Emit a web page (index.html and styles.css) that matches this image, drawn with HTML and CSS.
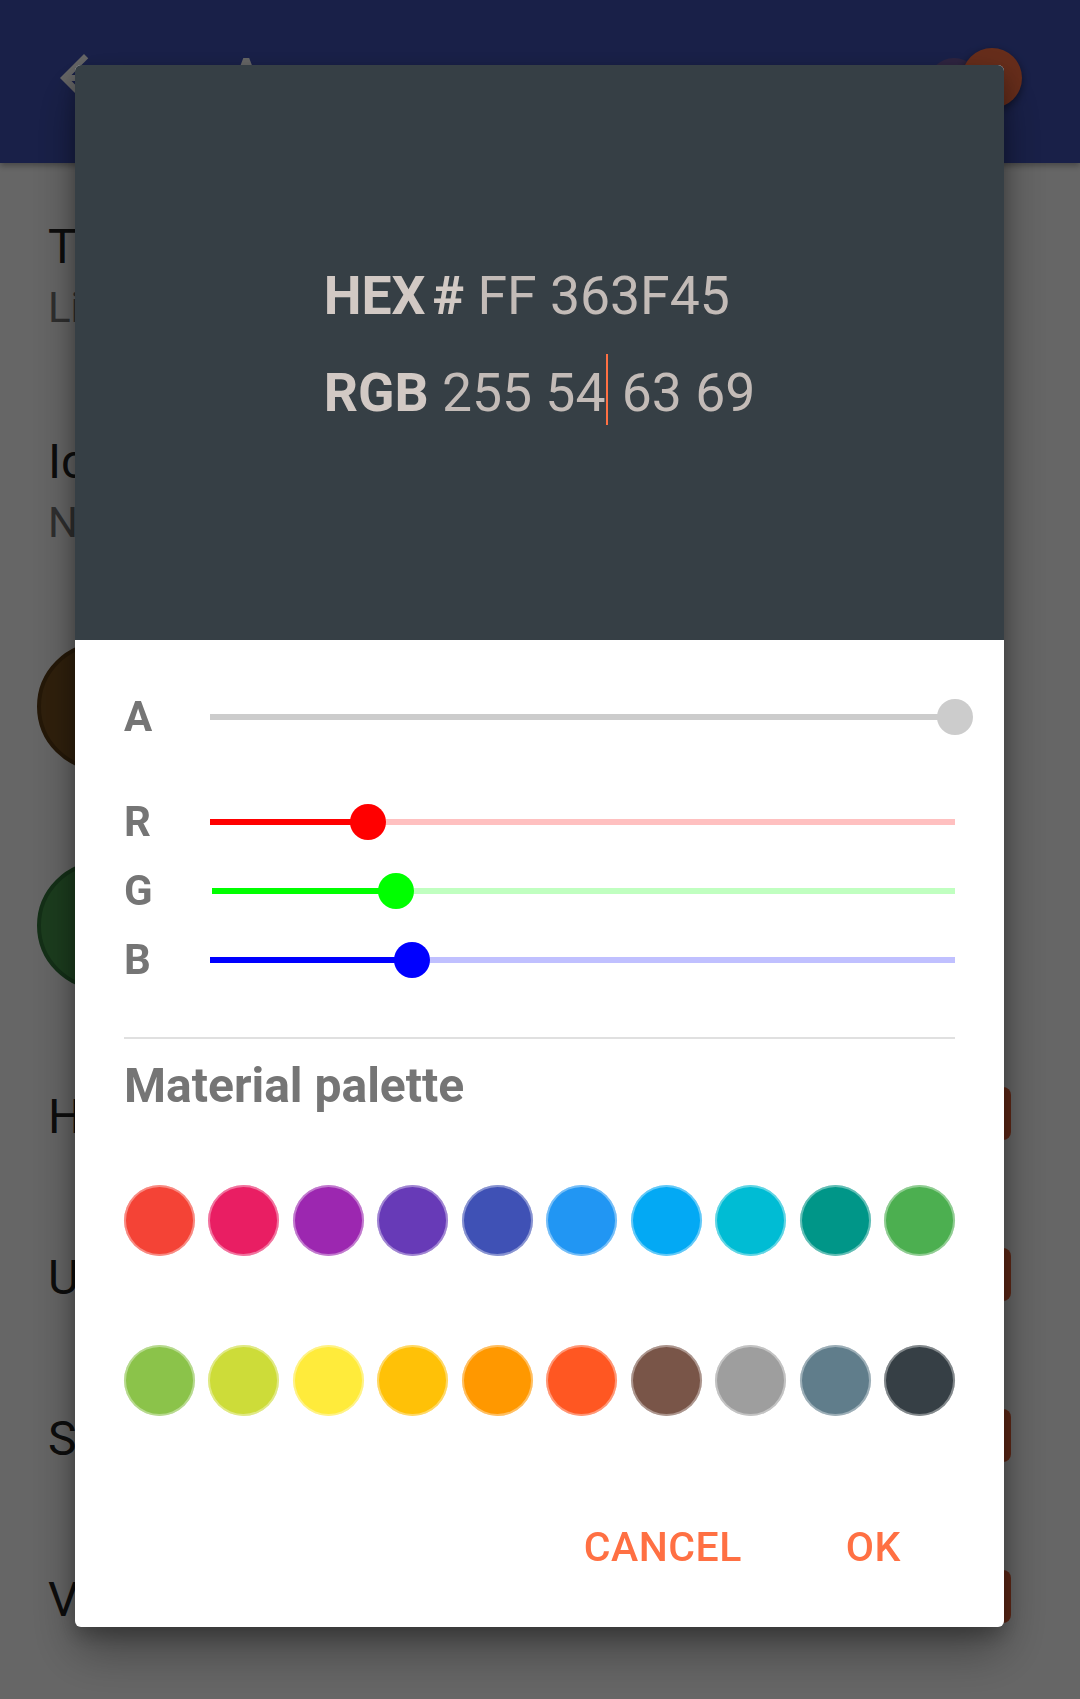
FILE: index.html
```html
<!DOCTYPE html>
<html lang="en">
<head>
<meta charset="utf-8">
<title>Color picker</title>
<link rel="stylesheet" href="styles.css">
</head>
<body>
<div class="page">
  <header class="appbar">
    <svg class="back" viewBox="0 0 24 24"><path d="M20 11H7.83l5.59-5.59L12 4l-8 8 8 8 1.41-1.41L7.83 13H20v-2z"/></svg>
    <div class="title">Appearance</div>
    <div class="actions"><span class="avatar2"></span><span class="avatar"></span></div>
  </header>
  <main class="list">
    <div class="pref first">
      <div class="p-title">Theme</div>
      <div class="p-sub">Light</div>
    </div>
    <div class="pref second">
      <div class="p-title">Icon pack</div>
      <div class="p-sub">None</div>
    </div>
    <div class="dot brown"></div>
    <div class="dot green"></div>
    <div class="row first-row"><span class="row-title">Header</span><span class="obtn"></span></div>
    <div class="row"><span class="row-title">Unread</span><span class="obtn"></span></div>
    <div class="row"><span class="row-title">Sent</span><span class="obtn"></span></div>
    <div class="row"><span class="row-title">Visited</span><span class="obtn"></span></div>
  </main>
</div>
<div class="scrim"></div>
<div class="dialog">
  <div class="preview">
    <div class="codes">
      <div class="line"><span class="key">HEX</span><span class="key hash">#</span> <span class="val">FF 363F45</span></div>
      <div class="line"><span class="key">RGB</span> <span class="val">255 54</span><span class="caret"></span><span class="val"> 63 69</span></div>
    </div>
  </div>
  <div class="body">
    <div class="slider a-row">
      <span class="lbl">A</span>
      <div class="track t-a"><div class="fill f-a" style="width:100%"></div><div class="thumb th-a" style="left:100%"></div></div>
    </div>
    <div class="slider">
      <span class="lbl">R</span>
      <div class="track t-r"><div class="fill f-r" style="width:21.2%"></div><div class="thumb th-r" style="left:21.2%"></div></div>
    </div>
    <div class="slider">
      <span class="lbl">G</span>
      <div class="track t-g"><div class="fill f-g" style="width:24.7%"></div><div class="thumb th-g" style="left:24.7%"></div></div>
    </div>
    <div class="slider">
      <span class="lbl">B</span>
      <div class="track t-b"><div class="fill f-b" style="width:27.1%"></div><div class="thumb th-b" style="left:27.1%"></div></div>
    </div>
    <div class="divider"></div>
    <div class="pal-title">Material palette</div>
    <div class="swatches first-sw">
      <span class="sw" style="background:#F44336"></span>
      <span class="sw" style="background:#E91E63"></span>
      <span class="sw" style="background:#9C27B0"></span>
      <span class="sw" style="background:#673AB7"></span>
      <span class="sw" style="background:#3F51B5"></span>
      <span class="sw" style="background:#2196F3"></span>
      <span class="sw" style="background:#03A9F4"></span>
      <span class="sw" style="background:#00BCD4"></span>
      <span class="sw" style="background:#009688"></span>
      <span class="sw" style="background:#4CAF50"></span>
    </div>
    <div class="swatches second-sw">
      <span class="sw" style="background:#8BC34A"></span>
      <span class="sw" style="background:#CDDC39"></span>
      <span class="sw" style="background:#FFEB3B"></span>
      <span class="sw" style="background:#FFC107"></span>
      <span class="sw" style="background:#FF9800"></span>
      <span class="sw" style="background:#FF5722"></span>
      <span class="sw" style="background:#795548"></span>
      <span class="sw" style="background:#9E9E9E"></span>
      <span class="sw" style="background:#607D8B"></span>
      <span class="sw" style="background:#363F45"></span>
    </div>
    <div class="buttons">
      <span class="btn cancel">CANCEL</span>
      <span class="btn ok">OK</span>
    </div>
  </div>
</div>
</body>
</html>
```

FILE: styles.css
```css
html, body {
  margin: 0;
  padding: 0;
}
body {
  width: 1080px;
  height: 1699px;
  overflow: hidden;
  background: #ffffff;
  font-family: Roboto, "Liberation Sans", sans-serif;
}
.page {
  width: 1080px;
  height: 1699px;
}
.appbar {
  height: 163px;
  box-sizing: border-box;
  background: #3F51B5;
  display: flex;
  align-items: flex-start;
  padding: 42px 58px 0 48px;
  box-shadow: 0 3px 6px rgba(0,0,0,0.3);
}
.back {
  width: 72px;
  height: 72px;
  fill: #ffffff;
  flex: none;
}
.title {
  margin-left: 109px;
  font-size: 52px;
  font-weight: 500;
  line-height: 72px;
  color: #ffffff;
}
.actions {
  margin-left: auto;
  display: flex;
  align-items: flex-start;
}
.avatar2 {
  width: 52px;
  height: 52px;
  border-radius: 50%;
  background: #735aa0;
  margin-top: 16px;
  margin-right: -18px;
}
.avatar {
  width: 60px;
  height: 60px;
  border-radius: 50%;
  background: #FF7043;
  margin-top: 6px;
  box-shadow: 0 3px 8px rgba(0,0,0,0.45);
}
.list {
  padding: 0 69px 0 48px;
}
.pref.first { padding-top: 56px; }
.pref.second { margin-top: 101px; }
.p-title {
  font-size: 48px;
  line-height: 56px;
  color: #212121;
}
.p-sub {
  font-size: 42px;
  line-height: 50px;
  color: #757575;
  margin-top: 8px;
}
.dot {
  width: 129px;
  height: 129px;
  border-radius: 50%;
  box-sizing: border-box;
  margin-left: -11px;
}
.dot.brown {
  margin-top: 94px;
  background: #77501f;
  border: 4px solid #5c3c14;
}
.dot.green {
  margin-top: 90px;
  background: #46984b;
  border: 4px solid #32773a;
}
.row {
  height: 161px;
  display: flex;
  align-items: center;
  justify-content: space-between;
}
.row.first-row { margin-top: 46px; }
.row-title {
  font-size: 48px;
  line-height: 56px;
  color: #212121;
}
.obtn {
  width: 150px;
  height: 53px;
  border-radius: 8px;
  background: #ec6237;
  margin-top: -6px;
}
.scrim {
  position: fixed;
  inset: 0;
  background: rgba(0,0,0,0.6);
}
.dialog {
  position: fixed;
  left: 75px;
  top: 65px;
  width: 929px;
  height: 1562px;
  border-radius: 6px;
  overflow: hidden;
  background: #ffffff;
  box-shadow: 0 24px 48px rgba(0,0,0,0.35), 0 8px 20px rgba(0,0,0,0.25);
}
.preview {
  height: 575px;
  box-sizing: border-box;
  background: #363F45;
  padding-top: 182px;
  display: flex;
  justify-content: center;
  align-items: flex-start;
}
.codes {
  font-size: 53.5px;
  line-height: 97px;
}
.line {
  white-space: nowrap;
}
.key {
  font-weight: 700;
  color: #d2c9c4;
}
.hash { margin-left: 7px; }
.val {
  font-weight: 400;
  color: #c3bbb7;
}
.caret {
  display: inline-block;
  width: 2px;
  height: 71px;
  background: #FF7043;
  margin-left: 1px;
  vertical-align: -14px;
}
.body {
  padding: 42px 49px 55px 49px;
}
.slider {
  height: 69px;
  display: flex;
  align-items: center;
}
.slider.a-row { margin-bottom: 36px; }
.lbl {
  width: 86px;
  flex: none;
  font-size: 42px;
  font-weight: 700;
  line-height: 1;
  color: #757575;
}
.track {
  flex: 1;
  height: 6px;
  position: relative;
}
.fill {
  position: absolute;
  left: 0;
  top: 0;
  bottom: 0;
}
.thumb {
  position: absolute;
  top: -15px;
  width: 36px;
  height: 36px;
  margin-left: -18px;
  border-radius: 50%;
}
.t-a { background: #cccccc; }
.f-a, .th-a { background: #cccccc; }
.t-r { background: #ffc0c0; }
.f-r, .th-r { background: #ff0000; }
.t-g { background: #c0ffc0; margin-left: 2px; }
.f-g, .th-g { background: #00ff00; }
.t-b { background: #c0c0ff; }
.f-b, .th-b { background: #0000ff; }
.divider {
  height: 2px;
  background: #e0e0e0;
  margin-top: 43px;
}
.pal-title {
  margin-top: 17px;
  font-size: 48px;
  font-weight: 700;
  line-height: 60px;
  color: #757575;
}
.swatches {
  display: flex;
  justify-content: space-between;
}
.first-sw { margin-top: 69px; }
.second-sw { margin-top: 89px; }
.sw {
  width: 71px;
  height: 71px;
  border-radius: 50%;
  box-shadow: inset 0 0 0 2px rgba(255,255,255,0.38);
}
.buttons {
  margin-top: 106px;
  display: flex;
  justify-content: flex-end;
}
.btn {
  font-size: 41px;
  font-weight: 500;
  line-height: 50px;
  color: #FF7043;
  letter-spacing: 0.5px;
}
.cancel { margin-right: 104px; }
.ok { margin-right: 54px; }
```
